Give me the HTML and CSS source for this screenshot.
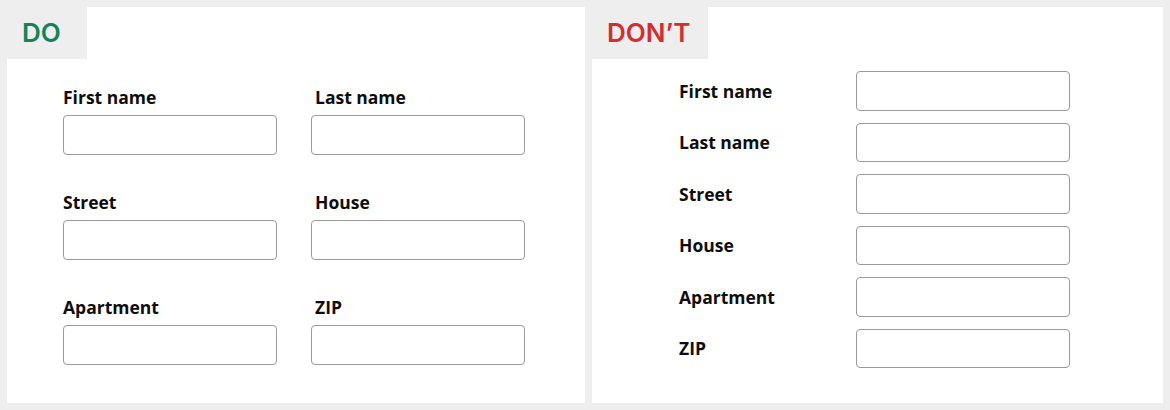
FILE: index.html
```html
<html>
    <head>
<link rel="stylesheet" href="styles.css">
    </head>
    <body>
        <div class="page">
            <!-- Good: labels above fields, two columns -->
            <div class="panel">
                <div class="tag do">DO</div>
                <form class="grid-form">
                    <label class="field"><span>First name</span><input type="text"></label>
                    <label class="field"><span>Last name</span><input type="text"></label>
                    <label class="field"><span>Street</span><input type="text"></label>
                    <label class="field"><span>House</span><input type="text"></label>
                    <label class="field"><span>Apartment</span><input type="text"></label>
                    <label class="field"><span>ZIP</span><input type="text"></label>
                </form>
            </div>
            <!-- Bad: labels beside fields, one long column -->
            <div class="panel">
                <div class="tag dont">DON’T</div>
                <form class="row-form">
                    <label class="row"><span>First name</span><input type="text"></label>
                    <label class="row"><span>Last name</span><input type="text"></label>
                    <label class="row"><span>Street</span><input type="text"></label>
                    <label class="row"><span>House</span><input type="text"></label>
                    <label class="row"><span>Apartment</span><input type="text"></label>
                    <label class="row"><span>ZIP</span><input type="text"></label>
                </form>
            </div>
        </div>
    </body>
</html>
```

FILE: styles.css
```css
/* Page frame */
body {
    margin: 0;
    background: #eeeeee;
    font-family: Inter, "Noto Sans", sans-serif;
    color: #111;
}
.page {
    display: flex;
    gap: 7px;
    padding: 7px;
    height: 410px;
    box-sizing: border-box;
}
/* White card with a grey tab cut into its corner */
.panel {
    background: #fff;
    display: flex;
    flex-direction: column;
}
.panel:first-child {
    width: 578px;
}
.panel:last-child {
    width: 571px;
}
.tag {
    align-self: flex-start;
    height: 52px;
    box-sizing: border-box;
    background: #eeeeee;
    padding: 10px 0 0 15px;
    font-size: 26px;
    font-weight: 600;
    line-height: 32px;
}
.tag.do {
    width: 80px;
    color: #128456;
}
.tag.dont {
    width: 116px;
    color: #d32f2f;
}
/* Shared label and input look */
.field span, .row span {
    font-family: "Open Sans", Inter, sans-serif;
    font-size: 17.5px;
    font-weight: 700;
    line-height: 20px;
    color: #0d0d0d;
}
input {
    height: 40px;
    box-sizing: border-box;
    border: 1px solid #9a9a9a;
    border-radius: 4px;
    background: #fff;
    margin: 0;
}
/* Two-column layout */
.grid-form {
    display: grid;
    grid-template-columns: 214px 214px;
    column-gap: 34px;
    row-gap: 37px;
    padding: 28px 0 0 56px;
}
.field {
    display: flex;
    flex-direction: column;
    gap: 8px;
}
/* right-hand labels sit a touch in from their field */
.field:nth-child(even) span {
    padding-left: 4px;
}
/* Single column with labels at the side */
.row-form {
    display: flex;
    flex-direction: column;
    gap: 12px;
    padding: 12px 0 0 87px;
}
.row {
    display: flex;
    align-items: center;
}
.row span {
    width: 177px;
}
.row input {
    width: 214px;
    height: 39.5px;
}
```
